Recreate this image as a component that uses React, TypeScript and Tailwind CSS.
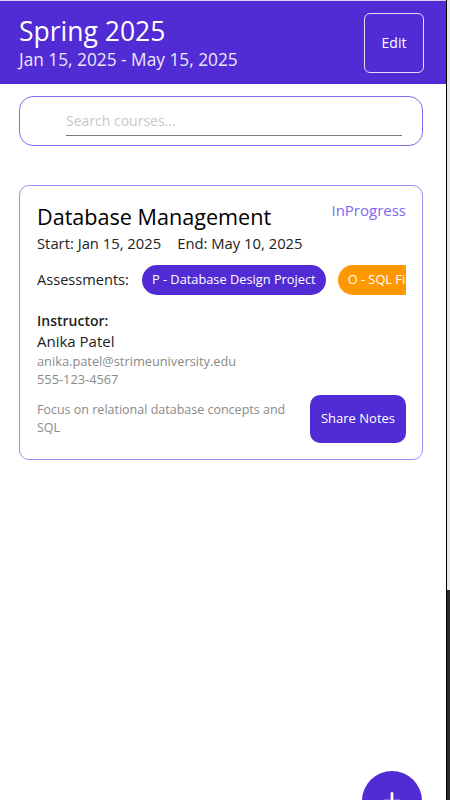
import { Plus } from 'lucide-react';

const font = { fontFamily: '"Open Sans", "Noto Sans", sans-serif' };

function Header() {
  return (
    <div className="bg-[#512BD4] border-t border-[#d6d0f2] h-[84px] px-[19px] flex items-center justify-between">
      <div className="text-white">
        <h1 className="text-[26.5px] leading-[32px] font-medium">Spring 2025</h1>
        <p className="text-[17.3px] leading-[22px] mt-[2px] text-[#ece8fb]">Jan 15, 2025 - May 15, 2025</p>
      </div>
      <button className="w-[60px] h-[60px] mr-[3px] border border-[#e3ddfa] rounded-[6px] text-white text-[14px]">
        Edit
      </button>
    </div>
  );
}

function SearchBox() {
  return (
    <div className="ml-[19px] mr-[23px] mt-[12px] h-[50px] border border-[#7f6ef0] rounded-[14px] flex items-center">
      <div className="ml-[46px] mr-[20px] flex-1 border-b border-[#7a7a7a] pb-[3px] mt-[1px]">
        <input
          placeholder="Search courses..."
          className="w-full text-[14px] leading-[20px] outline-none placeholder:text-[#c8c8c8]"
          style={font}
        />
      </div>
    </div>
  );
}

function CourseCard() {
  return (
    <div className="ml-[19px] mr-[23px] mt-[39px] border border-[#9d8ff0] rounded-[10px] pl-[17px] pr-[16px] pt-[16px] pb-[16px]">
      <div className="flex items-start justify-between">
        <h2 className="text-[21.6px] leading-[30px] text-black">Database Management</h2>
        <span className="text-[15px] leading-[22px] text-[#7b68ee] mt-[-3px]">InProgress</span>
      </div>
      <p className="text-[14.8px] leading-[20px] text-[#222] mt-[1px]">
        Start: Jan 15, 2025<span className="ml-[16px]">End: May 10, 2025</span>
      </p>
      <div className="flex items-center mt-[12px]">
        <span className="text-[14.6px] text-[#222] mr-[13px] shrink-0">Assessments:</span>
        <div className="flex gap-[12px] overflow-hidden flex-1">
          <span className="shrink-0 h-[30px] px-[10px] flex items-center rounded-full bg-[#512BD4] text-white text-[12.8px]">
            P - Database Design Project
          </span>
          <span className="shrink-0 h-[30px] px-[10px] flex items-center rounded-full bg-[#ff9800] text-white text-[12.8px]">
            O - SQL Final Exam
          </span>
        </div>
      </div>
      <p className="text-[14px] leading-[20px] font-semibold text-[#222] mt-[16px]">Instructor:</p>
      <p className="text-[15px] leading-[20px] text-[#222]">Anika Patel</p>
      <p className="text-[12.8px] leading-[18px] text-[#8a8a8a] mt-[1px]">anika.patel@strimeuniversity.edu</p>
      <p className="text-[12.8px] leading-[18px] text-[#8a8a8a]">555-123-4567</p>
      <div className="flex items-center justify-between mt-[7px]">
        <p className="text-[12.5px] leading-[18px] text-[#8a8a8a] w-[268px]">
          Focus on relational database concepts and SQL
        </p>
        <button className="w-[96px] h-[48px] rounded-[10px] bg-[#512BD4] text-white text-[13px]">
          Share Notes
        </button>
      </div>
    </div>
  );
}

export default function App() {
  return (
    <div className="w-[450px] h-[800px] flex overflow-hidden bg-white" style={font}>
      <div className="w-[446px] h-full relative overflow-hidden">
        <Header />
        <SearchBox />
        <CourseCard />
        <button className="absolute left-[362px] top-[771px] w-[60px] h-[60px] rounded-full bg-[#512BD4] text-white flex items-center justify-center">
          <Plus size={26} strokeWidth={2.5} />
        </button>
      </div>
      <div className="w-[4px] h-full border-l border-black flex flex-col">
        <div className="h-[590px] bg-[#e8e8e8]" />
        <div className="flex-1 bg-[#2b2b2b]" />
      </div>
    </div>
  );
}
